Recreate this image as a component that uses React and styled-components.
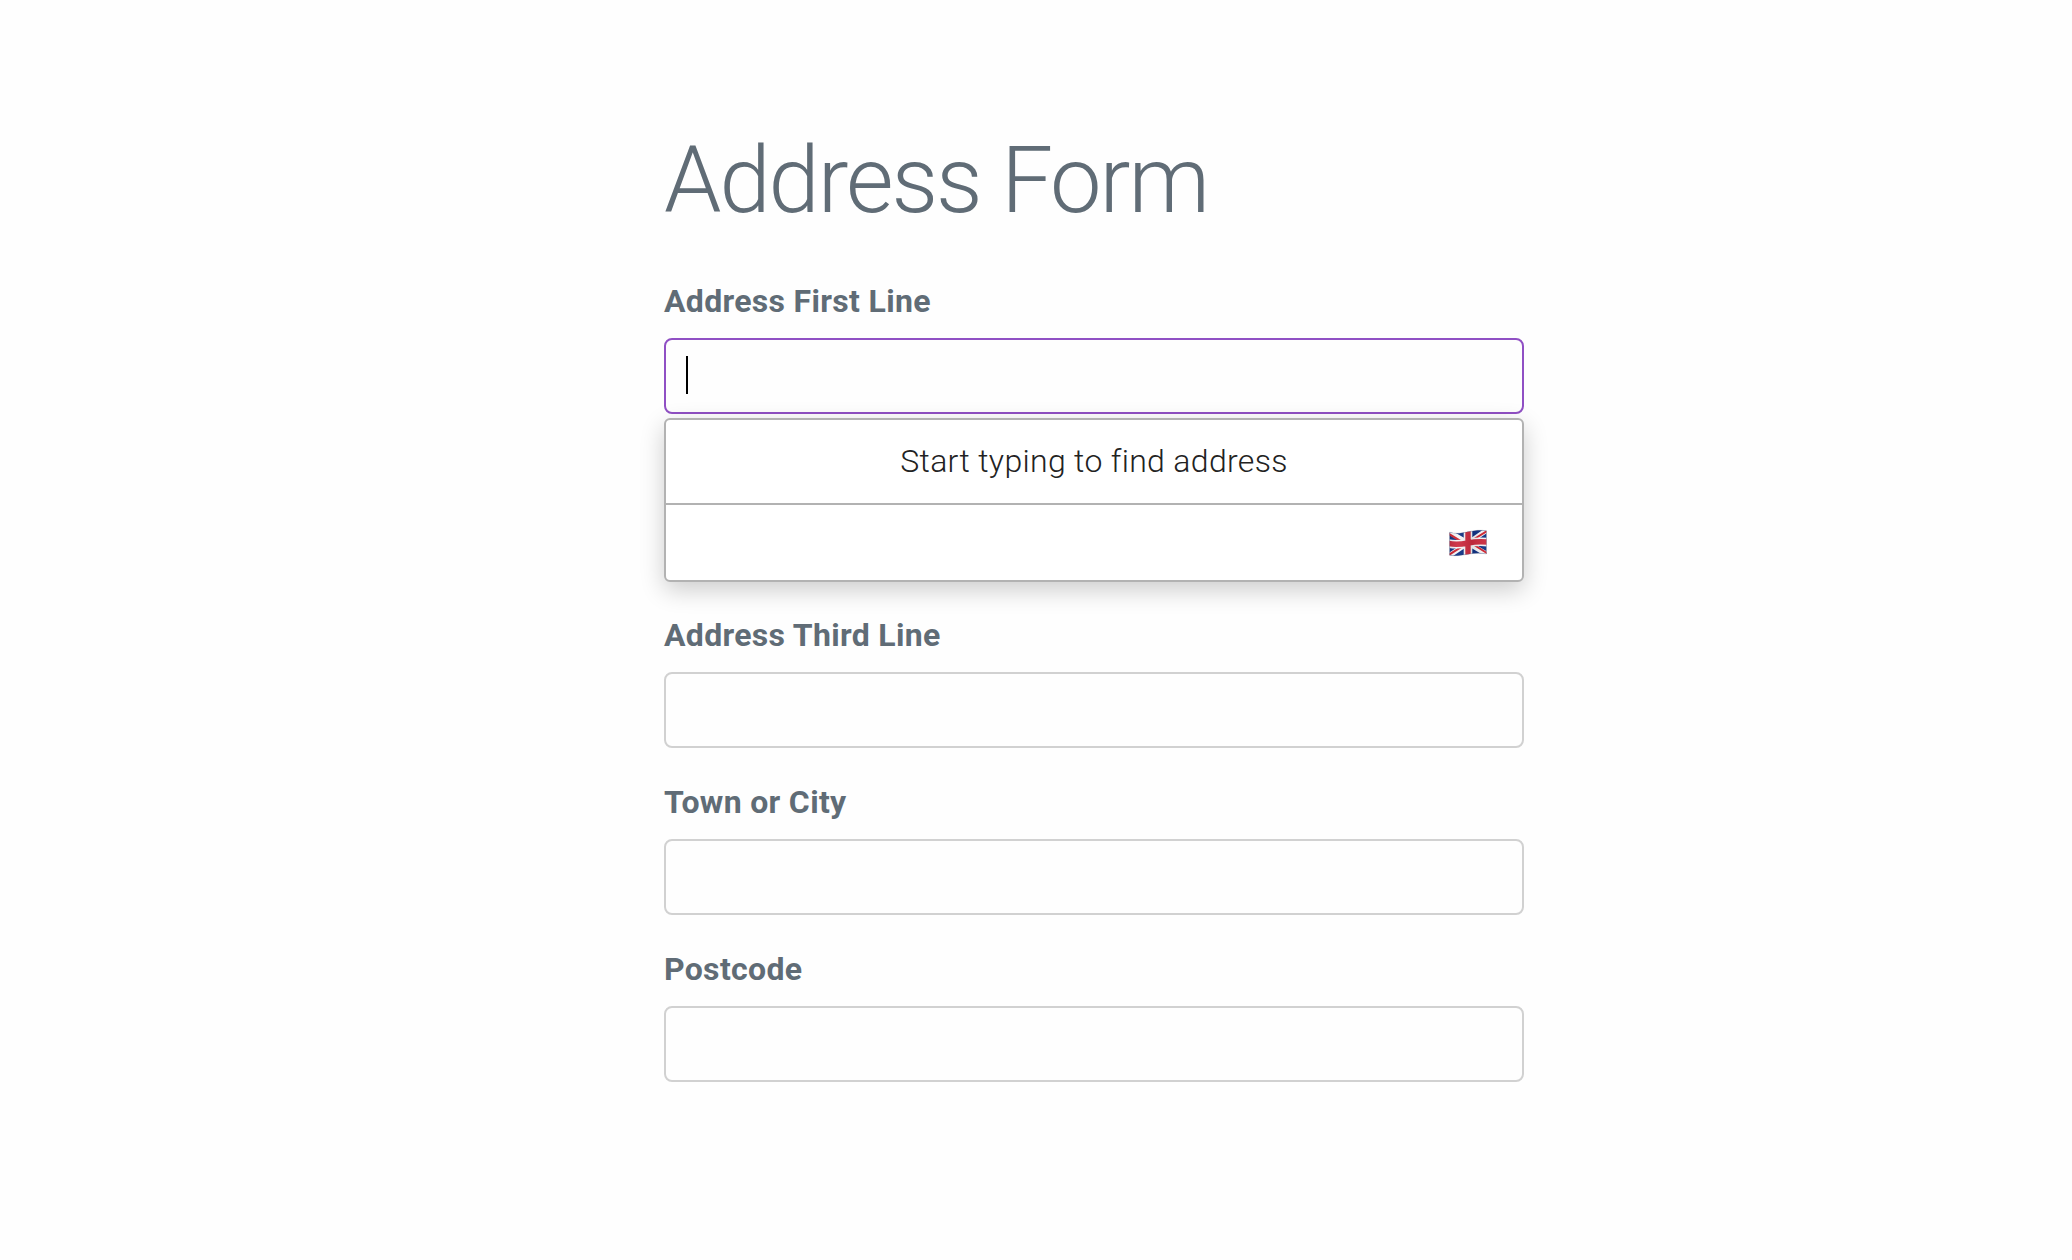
import React, { useState } from 'react'
import styled, { createGlobalStyle } from 'styled-components'

const GlobalStyle = createGlobalStyle`
*, *::before, *::after{
    box-sizing: border-box;
}

body{
    margin: 0;
    background: #fefefe;
    color: #606c76;
    font-family: Roboto, "Liberation Sans", sans-serif;
    font-size: 32px;
    font-weight: 300;
    letter-spacing: 0.01em;
    line-height: 51px;
}
`

const PageStyled = styled.main`
display: grid;
grid-template-columns: 166fr 215fr 137fr;
padding: 126px 0;
`

const AddressFormStyled = styled.form`
grid-column: 2;
display: flex;
flex-direction: column;
`

const Title = styled.h1`
margin: 0 0 40px;
font-size: 92px;
font-weight: 300;
line-height: 110px;
letter-spacing: -2px;
`

const Field = styled.div`
display: flex;
flex-direction: column;
margin-bottom: 29px;
visibility: ${props => (props.$covered ? 'hidden' : 'visible')};
`

const Label = styled.label`
margin-bottom: 11px;
font-weight: 700;
`

const InputWrap = styled.div`
position: relative;
`

const TextInput = styled.input`
display: block;
width: 100%;
height: 76px;
padding: 12px 20px;
border: 2px solid ${props => (props.$active ? '#9050c4' : '#d1d1d1')};
border-radius: 8px;
outline: none;
background: transparent;
color: #222222;
font: inherit;
letter-spacing: inherit;
caret-color: transparent;
`

const Caret = styled.span`
position: absolute;
top: 18px;
left: 22px;
width: 2px;
height: 38px;
background: #000000;
`

const Dropdown = styled.div`
position: absolute;
top: 100%;
left: 0;
right: 0;
z-index: 1;
margin-top: 4px;
border: 2px solid #b2b2b2;
border-radius: 6px;
background: #ffffff;
box-shadow: 0 8px 24px rgba(0, 0, 0, 0.2);
`

const Hint = styled.p`
margin: 0;
padding: 16px;
color: #222222;
text-align: center;
`

const DropdownFooter = styled.div`
display: flex;
align-items: center;
justify-content: flex-end;
height: 77px;
padding: 0 34px;
border-top: 2px solid #b2b2b2;
`

const FlagIcon = styled.svg`
display: block;
width: 40px;
height: 28px;
`

const fields = [
    { name: 'line1', label: 'Address First Line' },
    { name: 'line2', label: 'Address Second Line' },
    { name: 'line3', label: 'Address Third Line' },
    { name: 'town', label: 'Town or City' },
    { name: 'postcode', label: 'Postcode' },
]

function Flag() {
    return (
        <FlagIcon viewBox="0 0 40 28" role="img" aria-label="United Kingdom">
            <defs>
                <clipPath id="flag-shape">
                    <path d="M1.6 3.2C7 5 13 4.4 20 2.8C27 1.2 33 .8 38.4 1.8V25C33 23.8 27 24 20 25.2C13 26.4 7 27.4 1.6 26.2Z" />
                </clipPath>
                <linearGradient id="flag-shade">
                    <stop offset="0" stopColor="#000" stopOpacity=".1" />
                    <stop offset=".25" stopColor="#fff" stopOpacity=".06" />
                    <stop offset=".6" stopColor="#000" stopOpacity=".08" />
                    <stop offset="1" stopColor="#fff" stopOpacity=".04" />
                </linearGradient>
            </defs>
            <g clipPath="url(#flag-shape)">
                <path fill="#0f3284" d="M0 0H40V28H0Z" />
                <path stroke="#f4f4f6" strokeWidth="5" d="M0 2.4L20 14L40 26M0 27.4L20 14L40 .4" />
                <path stroke="#cf2430" strokeWidth="2" d="M0 4.4L17 14.6M40 24.8L23 14M0 26.4L17 15.6M40 1.4L23 12" />
                <path fill="none" stroke="#f4f4f6" strokeWidth="8.6" d="M0 14.4C7 16 13 15.4 20 14C27 12.6 33 12.2 40 13.2M20 0V28" />
                <path fill="none" stroke="#cc2c40" strokeWidth="5.4" d="M0 14.4C7 16 13 15.4 20 14C27 12.6 33 12.2 40 13.2M20 0V28" />
                <path fill="url(#flag-shade)" d="M0 0H40V28H0Z" />
            </g>
            <path fill="none" stroke="#5c6070" strokeOpacity=".35" strokeWidth=".6" d="M1.6 3.2C7 5 13 4.4 20 2.8C27 1.2 33 .8 38.4 1.8V25C33 23.8 27 24 20 25.2C13 26.4 7 27.4 1.6 26.2Z" />
        </FlagIcon>
    )
}

function App() {
    const [address, setAddress] = useState({})
    const [active, setActive] = useState('line1')

    const handleChange = (e) => {
        setAddress({ ...address, [e.target.name]: e.target.value })
    }

    return (
        <PageStyled>
            <GlobalStyle />
            <AddressFormStyled autoComplete="off">
                <Title>Address Form</Title>
                {fields.map((field) => (
                    // the open dropdown lies right over the second line
                    <Field key={field.name} $covered={field.name === 'line2' && active === 'line1'}>
                        <Label htmlFor={field.name}>{field.label}</Label>
                        <InputWrap>
                            <TextInput
                                type="text"
                                id={field.name}
                                name={field.name}
                                value={address[field.name] || ''}
                                onChange={handleChange}
                                onFocus={() => setActive(field.name)}
                                $active={active === field.name}
                            />
                            {active === field.name && !address[field.name] && <Caret />}
                            {field.name === 'line1' && active === 'line1' && (
                                <Dropdown>
                                    <Hint>Start typing to find address</Hint>
                                    <DropdownFooter>
                                        <Flag />
                                    </DropdownFooter>
                                </Dropdown>
                            )}
                        </InputWrap>
                    </Field>
                ))}
            </AddressFormStyled>
        </PageStyled>
    )
}

export default App
